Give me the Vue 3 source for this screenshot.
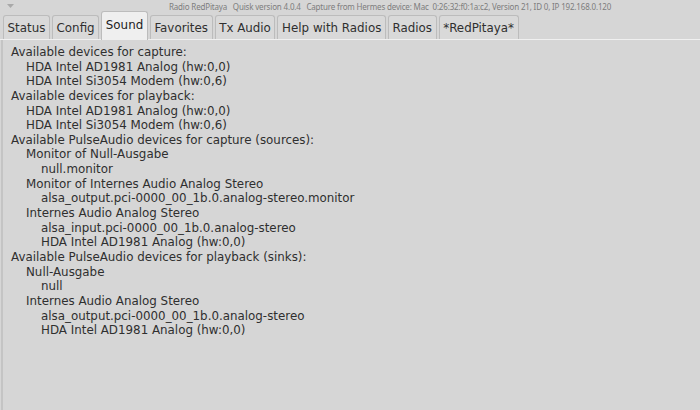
<template>
  <div class="window">
    <!-- title bar -->
    <div class="title-bar">
      <svg class="menu-arrow" width="7" height="4" viewBox="0 0 7 4"><path d="M0 0h7L3.5 4z" fill="#a9a9a9" /></svg>
      <span class="title">Radio RedPitaya&nbsp;&nbsp; Quisk version 4.0.4&nbsp;&nbsp; Capture from Hermes device: Mac&nbsp; 0:26:32:f0:1a:c2, Version 21, ID 0, IP 192.168.0.120</span>
    </div>

    <!-- tabs -->
    <div class="tab-row">
      <div
        v-for="tab in tabs"
        :key="tab"
        :class="['tab', tab === activeTab && 'active']"
      >
        {{ tab }}
      </div>
    </div>

    <!-- device list -->
    <div class="panel">
      <div
        v-for="(line, i) in lines"
        :key="i"
        :class="['line', 'indent-' + line.level]"
      >
        {{ line.text }}
      </div>
    </div>
  </div>
</template>

<script setup>
const tabs = ['Status', 'Config', 'Sound', 'Favorites', 'Tx Audio', 'Help with Radios', 'Radios', '*RedPitaya*']
const activeTab = 'Sound'

const lines = [
  { level: 0, text: 'Available devices for capture:' },
  { level: 1, text: 'HDA Intel AD1981 Analog (hw:0,0)' },
  { level: 1, text: 'HDA Intel Si3054 Modem (hw:0,6)' },
  { level: 0, text: 'Available devices for playback:' },
  { level: 1, text: 'HDA Intel AD1981 Analog (hw:0,0)' },
  { level: 1, text: 'HDA Intel Si3054 Modem (hw:0,6)' },
  { level: 0, text: 'Available PulseAudio devices for capture (sources):' },
  { level: 1, text: 'Monitor of Null-Ausgabe' },
  { level: 2, text: 'null.monitor' },
  { level: 1, text: 'Monitor of Internes Audio Analog Stereo' },
  { level: 2, text: 'alsa_output.pci-0000_00_1b.0.analog-stereo.monitor' },
  { level: 1, text: 'Internes Audio Analog Stereo' },
  { level: 2, text: 'alsa_input.pci-0000_00_1b.0.analog-stereo' },
  { level: 2, text: 'HDA Intel AD1981 Analog (hw:0,0)' },
  { level: 0, text: 'Available PulseAudio devices for playback (sinks):' },
  { level: 1, text: 'Null-Ausgabe' },
  { level: 2, text: 'null' },
  { level: 1, text: 'Internes Audio Analog Stereo' },
  { level: 2, text: 'alsa_output.pci-0000_00_1b.0.analog-stereo' },
  { level: 2, text: 'HDA Intel AD1981 Analog (hw:0,0)' }
]
</script>

<style>
body {
  background: #d6d6d6;
}
</style>

<style scoped>
.window {
  width: 700px;
  height: 410px;
  overflow: hidden;
  display: flex;
  flex-direction: column;
  background: #d6d6d6;
  color: #2f2f2f;
  font-family: "DejaVu Sans", sans-serif;
}

/* ===== title bar ===== */
.title-bar {
  height: 13px;
  flex: none;
  position: relative;
  display: flex;
  align-items: center;
  padding-left: 169px;
}

.menu-arrow {
  position: absolute;
  left: 7px;
  top: 4px;
}

.title {
  font-family: "Noto Sans", sans-serif;
  font-size: 8px;
  letter-spacing: -0.17px;
  color: #7d7d7d;
  white-space: nowrap;
}

/* ===== tabs ===== */
.tab-row {
  height: 26px;
  flex: none;
  display: flex;
  align-items: flex-end;
  padding-left: 3px;
  gap: 2px;
  border-bottom: 1px solid #f0f0f0;
}

.tab {
  height: 23px;
  padding: 0 3.6px;
  display: flex;
  align-items: center;
  font-size: 11.87px;
  border: 1px solid #bcbcbc;
  border-bottom: none;
  border-radius: 3px 3px 0 0;
  background: #d9d9d9;
}

.tab.active {
  height: 26px;
  padding-bottom: 2px;
  margin-bottom: -1px;
  background: #efefef;
  color: #222;
}

/* ===== panel ===== */
.panel {
  flex: 1;
  padding: 5px 0 0 8px;
  margin-left: 1px;
  border-left: 2px solid #c4c4c4;
  font-size: 11.87px;
}

.line {
  height: 14.65px;
  line-height: 14.65px;
  white-space: nowrap;
}

.indent-1 {
  padding-left: 15px;
}

.indent-2 {
  padding-left: 30px;
}
</style>
